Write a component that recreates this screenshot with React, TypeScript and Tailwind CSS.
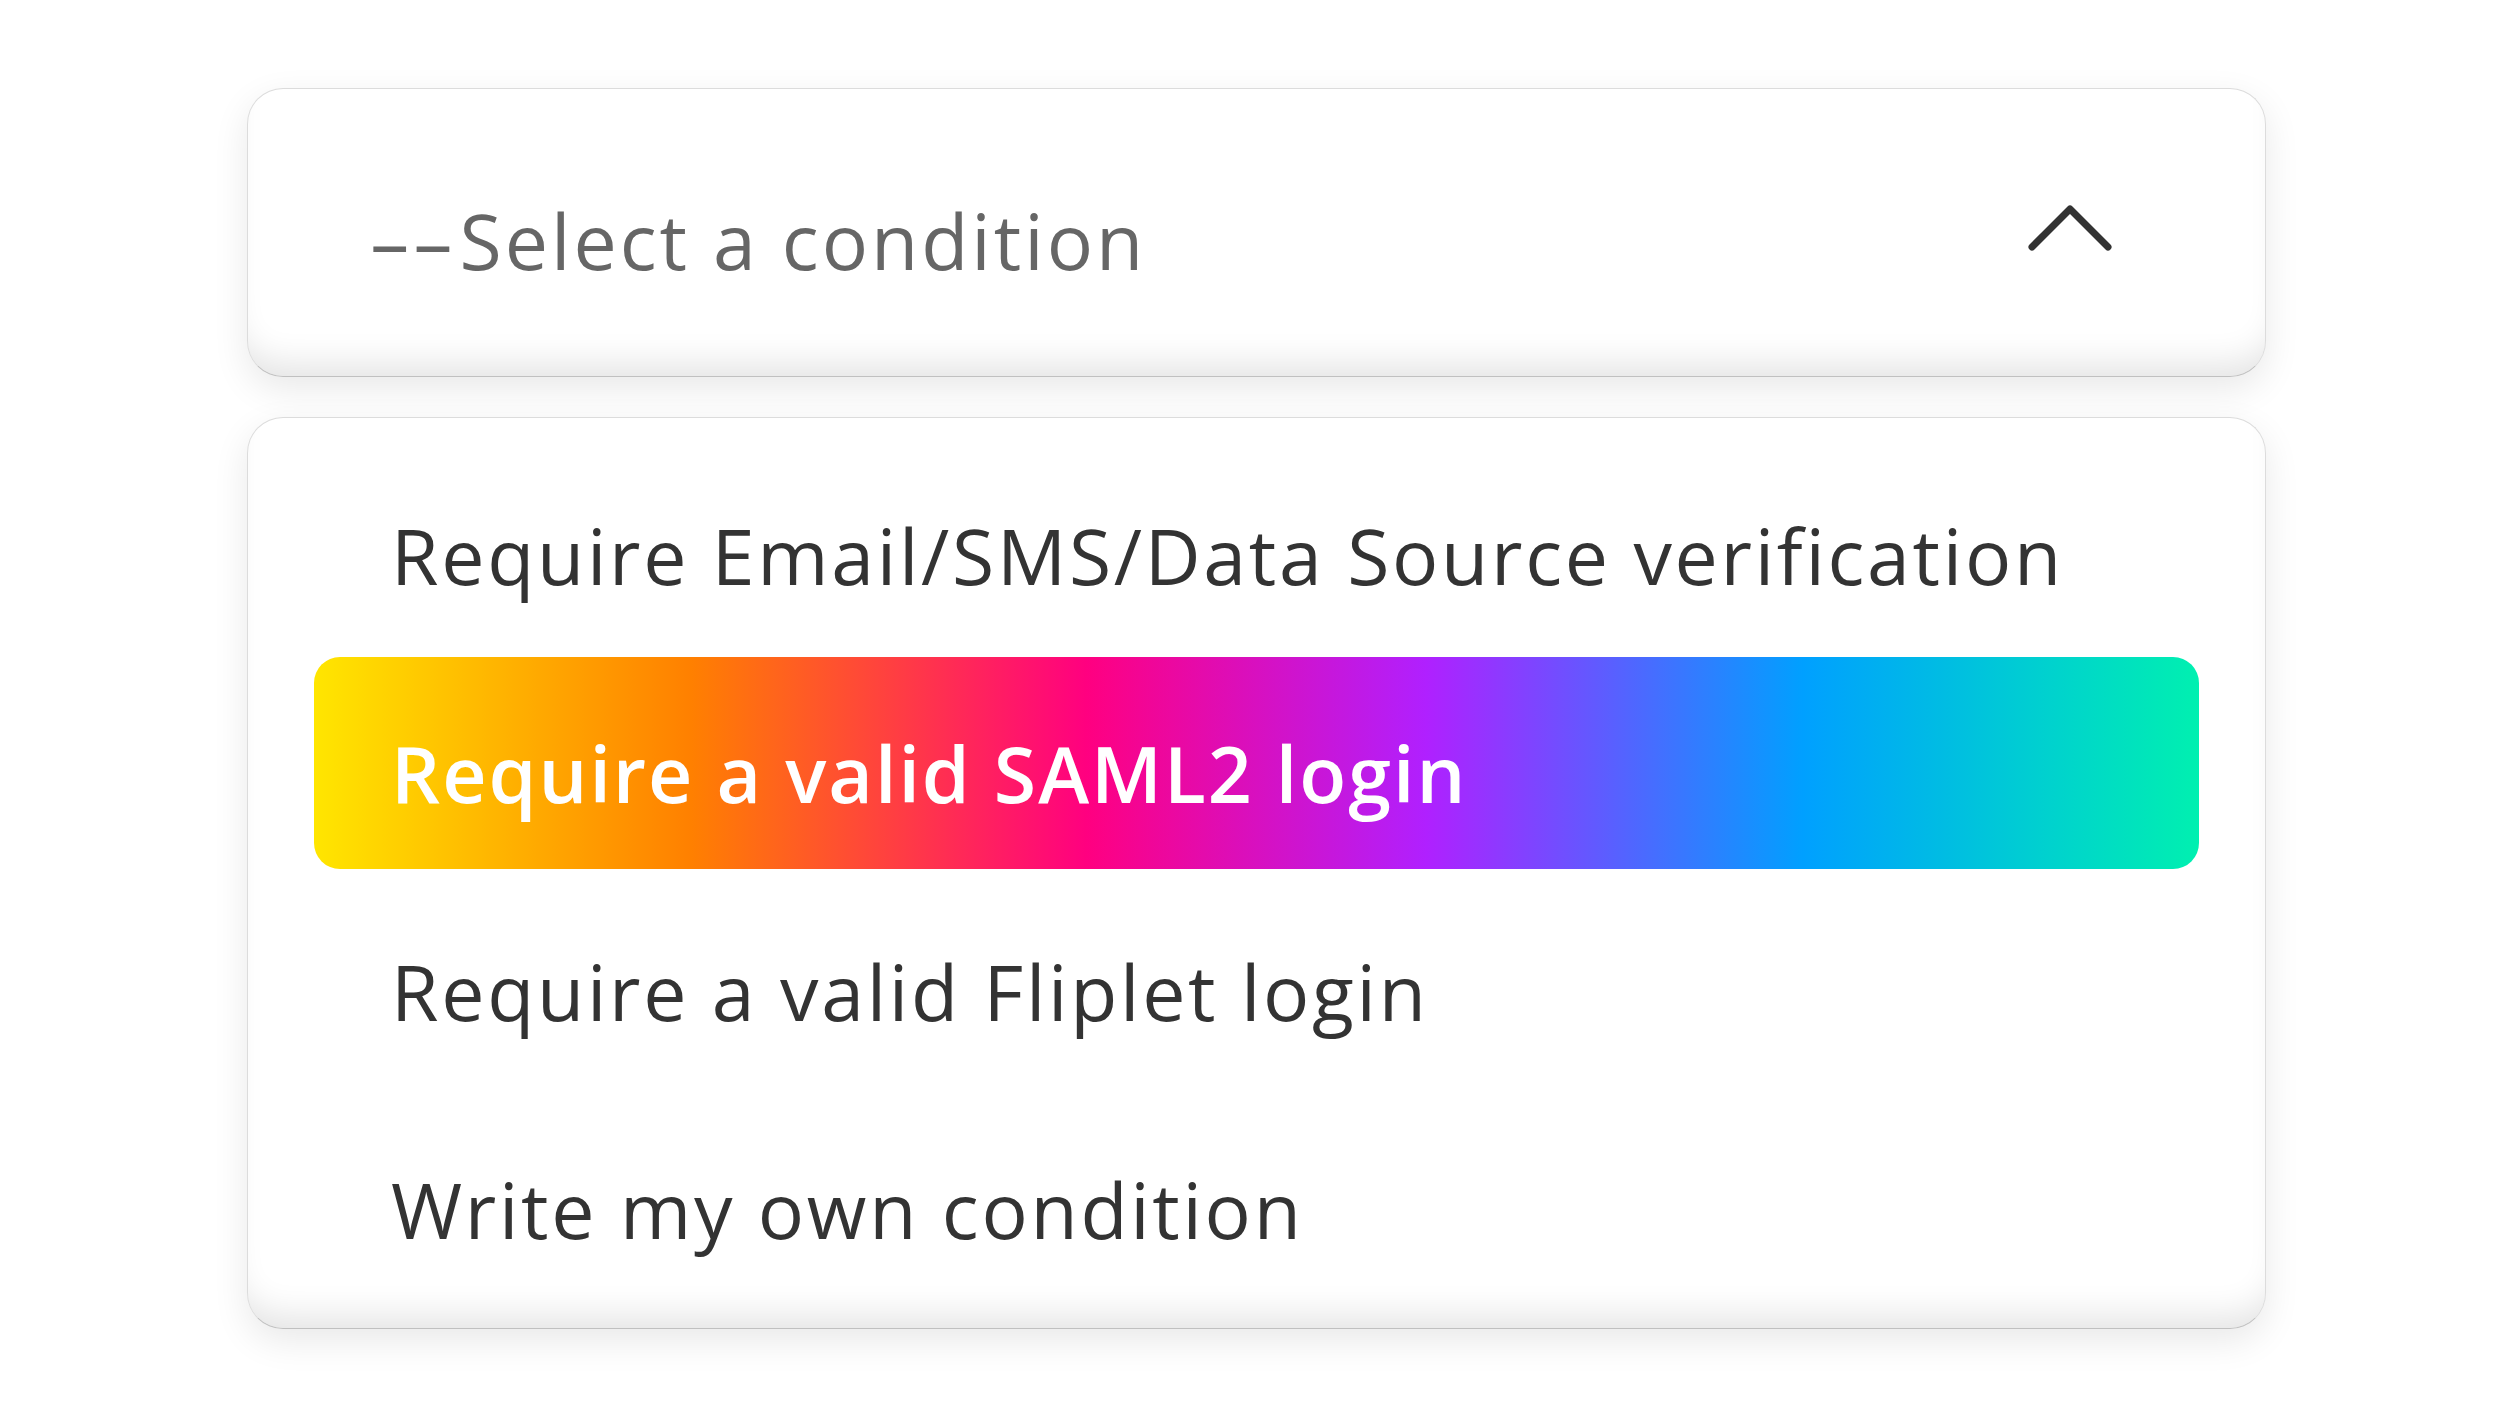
export default function App() {
  const options = [
    { label: 'Require Email/SMS/Data Source verification', active: false },
    { label: 'Require a valid SAML2 login', active: true },
    { label: 'Require a valid Fliplet login', active: false },
    { label: 'Write my own condition', active: false },
  ]

  return (
    <div className="min-h-screen w-full bg-white font-['Open_Sans',sans-serif]">
      <div className="mx-auto w-[2019px] pt-[88px]">
        {/* Select trigger */}
        <div className="flex h-[289px] items-center justify-between rounded-[36px] border border-[#dcdcdc] border-b-[#c0c0c0] bg-white pl-[120px] pr-[153px] shadow-[inset_0_-30px_34px_-18px_rgba(0,0,0,0.11),0_12px_36px_rgba(0,0,0,0.09)]">
          <span className="flex items-baseline pt-[16px] text-[77px] leading-none tracking-[3px] text-[#666666]">
            <span className="mr-[42px] inline-block origin-left scale-x-[1.75] tracking-normal">--</span>
            <span>Select a condition</span>
          </span>
          <svg width="84" height="52" viewBox="0 0 84 52" className="-mt-[8px]">
            <path
              d="M4 44 L42 6 L80 44"
              fill="none"
              stroke="#333333"
              strokeWidth="7"
              strokeLinecap="round"
              strokeLinejoin="round"
            />
          </svg>
        </div>

        {/* Options list */}
        <div className="mt-[40px] flex flex-col gap-[6px] rounded-[36px] border border-[#dcdcdc] border-b-[#c0c0c0] bg-white px-[66px] pt-[21px] pb-[23px] shadow-[inset_0_-30px_34px_-18px_rgba(0,0,0,0.11),0_12px_36px_rgba(0,0,0,0.09)]">
          {options.map((option) => (
            <div
              key={option.label}
              className={
                option.active
                  ? 'flex h-[212px] items-center rounded-[26px] bg-[linear-gradient(90deg,#ffe600_0%,#ff8000_20%,#ff0080_41%,#b020ff_59%,#00a0ff_79%,#00f0b0_100%)] pl-[77px]'
                  : 'flex h-[212px] items-center pl-[77px]'
              }
            >
              <span
                className={
                  option.active
                    ? 'pt-[20px] text-[77px] font-semibold leading-none tracking-[2px] text-white'
                    : 'pt-[20px] text-[77px] leading-none tracking-[2.7px] text-[#333333]'
                }
              >
                {option.label}
              </span>
            </div>
          ))}
        </div>
      </div>
    </div>
  )
}
